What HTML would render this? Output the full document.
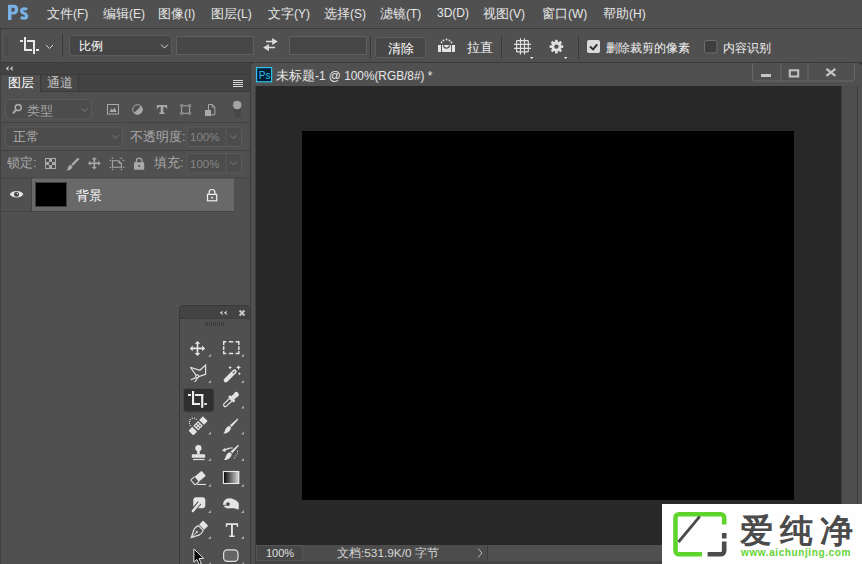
<!DOCTYPE html>
<html><head><meta charset="utf-8">
<style>
*{box-sizing:border-box;margin:0;padding:0}
html,body{width:862px;height:564px;overflow:hidden;background:#282828}
body{position:relative;font-family:"Liberation Sans",sans-serif;font-size:12px;color:#e6e6e6}
.a{position:absolute}
.t{position:absolute;white-space:nowrap;line-height:14px}
svg{position:absolute;overflow:visible}
</style></head><body>

<!-- MENU BAR -->
<div class="a" style="left:0;top:0;width:862px;height:28px;background:#505050"></div>
<svg style="left:0;top:0" width="40" height="28">
<path fill="#78b2e6" fill-rule="evenodd" d="M8 4.8 H13.6 C16.6 4.8 18.2 6.6 18.2 9.6 C18.2 12.6 16.4 14.6 13.4 14.6 H11.5 V19.9 H8 Z M11.5 7.7 V11.7 H13.2 C14.3 11.7 14.8 11 14.8 9.7 C14.8 8.4 14.3 7.7 13.2 7.7 Z"/>
<path d="M27 9.6 C26 8.9 25 8.8 24.1 8.8 C22.4 8.8 21.6 9.7 21.6 10.9 C21.6 13.6 26.7 13.1 26.7 16 C26.7 17.5 25.5 18.3 23.9 18.3 C22.9 18.3 21.8 18 20.8 17.3" fill="none" stroke="#78b2e6" stroke-width="3.1"/>
</svg>
<div class="t" style="left:47px;top:6px;line-height:15px"><span style="font-size:13px">文件</span><span style="font-size:12px">(F)</span></div>
<div class="t" style="left:103px;top:6px;line-height:15px"><span style="font-size:13px">编辑</span><span style="font-size:12px">(E)</span></div>
<div class="t" style="left:158px;top:6px;line-height:15px"><span style="font-size:13px">图像</span><span style="font-size:12px">(I)</span></div>
<div class="t" style="left:211px;top:6px;line-height:15px"><span style="font-size:13px">图层</span><span style="font-size:12px">(L)</span></div>
<div class="t" style="left:268px;top:6px;line-height:15px"><span style="font-size:13px">文字</span><span style="font-size:12px">(Y)</span></div>
<div class="t" style="left:324px;top:6px;line-height:15px"><span style="font-size:13px">选择</span><span style="font-size:12px">(S)</span></div>
<div class="t" style="left:380px;top:6px;line-height:15px"><span style="font-size:13px">滤镜</span><span style="font-size:12px">(T)</span></div>
<div class="t" style="left:437px;top:6px;line-height:15px;font-size:12px">3D(D)</div>
<div class="t" style="left:483px;top:6px;line-height:15px"><span style="font-size:13px">视图</span><span style="font-size:12px">(V)</span></div>
<div class="t" style="left:542px;top:6px;line-height:15px"><span style="font-size:13px">窗口</span><span style="font-size:12px">(W)</span></div>
<div class="t" style="left:603px;top:6px;line-height:15px"><span style="font-size:13px">帮助</span><span style="font-size:12px">(H)</span></div>
<div class="a" style="left:0;top:28px;width:862px;height:1px;background:#3a3a3a"></div>

<!-- OPTIONS BAR -->
<div class="a" style="left:0;top:29px;width:862px;height:33px;background:#505050"></div>
<div class="a" style="left:0;top:62px;width:862px;height:1px;background:#3a3a3a"></div>
<!-- grip -->
<div class="a" style="left:0;top:29px;width:1px;height:33px;background:#404040"></div>
<svg style="left:0;top:0" width="862" height="64">
<g fill="#454545">
<rect x="5" y="36" width="3" height="1"/><rect x="5" y="38" width="3" height="1"/><rect x="5" y="40" width="3" height="1"/><rect x="5" y="42" width="3" height="1"/><rect x="5" y="44" width="3" height="1"/><rect x="5" y="46" width="3" height="1"/><rect x="5" y="48" width="3" height="1"/><rect x="5" y="50" width="3" height="1"/><rect x="5" y="52" width="3" height="1"/><rect x="5" y="54" width="3" height="1"/>
</g>
<g fill="#e8e8e8">
<rect x="20" y="40" width="3" height="2"/><rect x="24" y="37" width="2" height="14"/><rect x="24" y="49" width="8" height="2"/>
<rect x="27" y="40" width="8" height="2"/><rect x="33" y="40" width="2" height="14"/><rect x="36" y="49" width="3" height="2"/>
</g>
<path d="M46 45 L49.5 48.5 L53 45" fill="none" stroke="#cfcfcf" stroke-width="1"/>
<rect x="62" y="34" width="1" height="23" fill="#3a3a3a"/>
</svg>
<div class="a" style="left:69px;top:35px;width:103px;height:21px;background:#454545;border:1px solid #5c5c5c;border-radius:3px"></div>
<div class="t" style="left:79px;top:39px;font-size:12.2px;color:#fff">比例</div>
<svg style="left:0;top:0" width="862" height="64"><path d="M161 44.5 L164.5 48 L168 44.5" fill="none" stroke="#d8d8d8" stroke-width="1"/></svg>
<div class="a" style="left:176px;top:36px;width:78px;height:19px;background:#474747;border:1px solid #5f5f5f"></div>
<div class="a" style="left:289px;top:36px;width:78px;height:19px;background:#474747;border:1px solid #5f5f5f"></div>
<svg style="left:0;top:0" width="862" height="64">
<g fill="#dcdcdc">
<path d="M266 40.7 H272.2 V38 L277.7 41.4 L272.2 44.9 V42.2 H266 Z"/>
<path d="M275.1 46.8 H268.9 V44 L263.2 47.6 L268.9 51.2 V48.3 H275.1 Z"/>
</g>
<rect x="370" y="35" width="1" height="23" fill="#3a3a3a"/>
</svg>
<div class="a" style="left:375px;top:37px;width:51px;height:21px;background:#474747;border:1px solid #5c5c5c;border-radius:3px"></div>
<div class="t" style="left:388px;top:41.5px;font-size:12.6px;color:#fff">清除</div>
<svg style="left:0;top:0" width="862" height="64">
<g fill="#e4e4e4">
<rect x="438" y="45" width="3" height="7"/>
<rect x="442" y="45" width="9.1" height="7"/>
<rect x="452" y="45" width="3" height="7"/>
<circle cx="441.5" cy="42.4" r="0.9"/><circle cx="443.4" cy="40.5" r="0.9"/><circle cx="446.5" cy="39.5" r="0.9"/><circle cx="449.5" cy="40.5" r="0.9"/><circle cx="451.5" cy="42.4" r="0.9"/>
</g>
<path d="M443.6 45.2 A2.9 2.9 0 0 0 449.4 45.2" fill="none" stroke="#4a4a4a" stroke-width="1.1"/>
<rect x="501" y="36" width="1" height="22" fill="#3a3a3a"/>
<g stroke="#e0e0e0" stroke-width="1.15" fill="none">
<path d="M516.6 40.6 V51.9 M528.3 40.6 V51.9 M516.6 40.6 H528.3 M516.6 51.9 H528.3 M520.5 38.2 V54.6 M524.5 38.2 V54.6 M514 44.4 H531 M514 48.3 H531"/>
</g>
<path d="M530 57 H533.4 L531.7 59 Z" fill="#f0f0f0"/>
<g fill="#e0e0e0">
<circle cx="556.4" cy="46.6" r="5"/>
<g transform="translate(556.4 46.6)">
<rect x="-1.3" y="-6.8" width="2.6" height="13.6"/>
<rect x="-6.8" y="-1.3" width="13.6" height="2.6"/>
<rect x="-1.3" y="-6.8" width="2.6" height="13.6" transform="rotate(45)"/>
<rect x="-1.3" y="-6.8" width="2.6" height="13.6" transform="rotate(-45)"/>
</g>
</g>
<circle cx="556.4" cy="46.6" r="2.2" fill="#505050"/>
<path d="M564 57 H567.4 L565.7 59 Z" fill="#f0f0f0"/>
<rect x="578" y="36" width="1" height="23" fill="#3a3a3a"/>
<rect x="587" y="40" width="13" height="13" rx="2" fill="#dadada"/>
<path d="M590 46.6 L593.1 49.4 L597.2 44.3" fill="none" stroke="#2e2e2e" stroke-width="2"/>
<rect x="704.5" y="40.5" width="12.5" height="12.5" rx="2" fill="#3e3e3e" stroke="#6e6e6e" stroke-width="1"/>
</svg>
<div class="t" style="left:467px;top:41px;font-size:12.6px;color:#f0f0f0">拉直</div>
<div class="t" style="left:606px;top:41px;font-size:12.3px;color:#f0f0f0">删除裁剪的像素</div>
<div class="t" style="left:723px;top:41px;font-size:12.1px;color:#f0f0f0">内容识别</div>



<!-- LEFT DOCK -->
<div class="a" style="left:0;top:63px;width:250px;height:501px;background:#505050"></div>
<div class="a" style="left:0;top:63px;width:250px;height:11px;background:#434343"></div>
<div class="a" style="left:0;top:74px;width:250px;height:1px;background:#393939"></div>
<div class="a" style="left:0;top:75px;width:250px;height:16px;background:#434343"></div>
<div class="a" style="left:0;top:75px;width:40px;height:16px;background:#505050"></div>
<div class="a" style="left:40px;top:75px;width:39px;height:16px;background:#474747;border-left:1px solid #3a3a3a;border-right:1px solid #3a3a3a"></div>
<div class="a" style="left:40px;top:91px;width:210px;height:1px;background:#3a3a3a"></div>
<div class="a" style="left:0;top:63px;width:1px;height:501px;background:#404040"></div>
<div class="t" style="left:8px;top:76px;font-size:12.8px;color:#fff">图层</div>
<div class="t" style="left:47px;top:76px;font-size:12.8px;color:#c4c4c4">通道</div>
<svg style="left:0;top:0" width="260" height="564">
<path d="M5.8 68.45 L9 65.9 L8.1 68.45 L9 71 Z M9.9 68.45 L13.1 65.9 L12.2 68.45 L13.1 71 Z" fill="#d4d4d4"/>
<g fill="#d6d6d6"><rect x="233" y="80" width="10" height="1"/><rect x="233" y="82" width="10" height="1"/><rect x="233" y="84" width="10" height="1"/><rect x="233" y="86" width="10" height="1"/></g>
<rect x="0" y="122" width="250" height="1" fill="#424242"/>
<rect x="0" y="150" width="250" height="1" fill="#424242"/>
<!-- filter row -->
<rect x="5.5" y="99.5" width="86" height="19.5" rx="3" fill="#4c4c4c" stroke="#5b5b5b"/>
<circle cx="18.2" cy="107.6" r="3" fill="none" stroke="#a8a8a8" stroke-width="1.6"/>
<path d="M16 110 L13.5 112.7" stroke="#a8a8a8" stroke-width="2" stroke-linecap="round"/>
<path d="M81.5 108.3 L84.6 111.4 L87.7 108.3" fill="none" stroke="#7c7c7c" stroke-width="1"/>
<g fill="none" stroke="#a9a9a9" stroke-width="1">
<rect x="107.5" y="104.5" width="11" height="9.5"/>
<circle cx="137.5" cy="109.5" r="4.8"/>
<path d="M182 105.8 H189.3 M182 113.3 H189.3 M181.6 106 V113 M189.6 106 V113"/>
<circle cx="181.6" cy="105.6" r="1.15" fill="#505050"/><circle cx="189.6" cy="105.6" r="1.15" fill="#505050"/><circle cx="181.6" cy="113.4" r="1.15" fill="#505050"/><circle cx="189.6" cy="113.4" r="1.15" fill="#505050"/>
<path d="M208.5 110 V104.5 H212.3 L214.8 107 V114.8 H211"/>
<path d="M212.3 104.5 V107 H214.8"/>
</g>
<g fill="#a9a9a9">
<path d="M109.5 112 L111.5 108.2 L113 110.3 L114.6 107.6 L116.8 112 Z"/>
<path d="M141 106 A4.8 4.8 0 0 1 134 113 Z"/>
<path d="M156.8 105 H167.2 V108.5 H166 L165.3 106.8 H163.3 V112.6 H164.6 V114.1 H159.4 V112.6 H160.7 V106.8 H158.7 L158 108.5 H156.8 Z"/>
<rect x="205" y="110" width="6" height="6"/>
<circle cx="237.1" cy="104.9" r="4.1"/>
</g>
<rect x="232.9" y="101.4" width="8.6" height="17" rx="4.3" fill="#474747" stroke="#555" stroke-width="0.8"/>
<circle cx="237.2" cy="105.2" r="4.1" fill="#a4a4a4"/>
<!-- blend row -->
<rect x="5.5" y="127" width="117" height="19.5" rx="3" fill="#4c4c4c" stroke="#5b5b5b"/>
<path d="M112.5 109.3 M112.5 135.3 L115.6 138.4 L118.7 135.3" fill="none" stroke="#7c7c7c" stroke-width="1"/>
<rect x="187" y="127" width="54.5" height="19.5" rx="3" fill="#4c4c4c" stroke="#5b5b5b"/>
<rect x="225.5" y="127" width="1" height="19.5" fill="#5b5b5b"/>
<path d="M230.5 135.3 L233.6 138.4 L236.7 135.3" fill="none" stroke="#7c7c7c" stroke-width="1"/>
<!-- lock row -->
<rect x="187" y="153.5" width="54.5" height="19.5" rx="3" fill="#4c4c4c" stroke="#5b5b5b"/>
<rect x="225.5" y="153.5" width="1" height="19.5" fill="#5b5b5b"/>
<path d="M230.5 161.8 L233.6 164.9 L236.7 161.8" fill="none" stroke="#7c7c7c" stroke-width="1"/>
<g fill="#a9a9a9">
<path fill-rule="evenodd" d="M45 158 H56 V169 H45 Z M46 159 V162 H49 V159 Z M52 159 V162 H55 V159 Z M49 162 V165 H52 V162 Z M46 165 V168 H49 V165 Z M52 165 V168 H55 V165 Z"/>
<path d="M78.6 158 C79.6 158.5 79.4 159.3 78.7 160 L73 165.8 L71.2 164.2 L77 158.6 C77.6 158 78 157.8 78.6 158 Z"/>
<path d="M70.6 164.8 L72.5 166.5 C72.3 168.8 70.2 170.6 66.5 170.6 C67.6 169.8 67.5 167.8 68.6 166.3 C69.2 165.5 69.9 165.1 70.6 164.8 Z"/>
<path d="M94.3 157 L96.8 159.5 H95.1 V162.5 H98.1 V160.8 L100.7 163.3 L98.1 165.8 V164.1 H95.1 V167.1 H96.8 L94.3 169.6 L91.8 167.1 H93.5 V164.1 H90.5 V165.8 L87.9 163.3 L90.5 160.8 V162.5 H93.5 V159.5 H91.8 Z"/>
<rect x="134" y="162.2" width="10.2" height="7.6" rx="0.5"/>
</g>
<circle cx="139.2" cy="166" r="1" fill="#505050"/>
<path d="M136.4 162.6 V161 A2.8 2.8 0 0 1 142 161 V162.6" fill="none" stroke="#a9a9a9" stroke-width="1.3"/>
<path d="M112.4 160.8 H118.6 L121.4 163.6 V167.3 H112.4 Z" fill="none" stroke="#a9a9a9" stroke-width="1.1"/>
<g fill="#a9a9a9"><path d="M118.6 160.8 V163.6 H121.4 Z"/>
<rect x="111.8" y="157.6" width="1.2" height="1.4"/><rect x="109.6" y="159.8" width="1.4" height="1.2"/><rect x="109.6" y="166.8" width="1.4" height="1.2"/><rect x="111.8" y="168.8" width="1.2" height="1.4"/><rect x="120.8" y="168.8" width="1.2" height="1.4"/><rect x="122.8" y="166.8" width="1.4" height="1.2"/><rect x="120.8" y="157.6" width="1.2" height="1.4"/><rect x="122.8" y="159.8" width="1.4" height="1.2"/></g>
<!-- layer row -->
<rect x="0" y="177.5" width="250" height="1" fill="#424242"/>
<rect x="32" y="178.5" width="202" height="32.5" fill="#696969"/>
<rect x="0" y="211" width="234" height="1" fill="#454545"/>
<rect x="31" y="178.5" width="1" height="32.5" fill="#454545"/>
<rect x="35" y="182" width="32" height="25" fill="#3e3e3e"/>
<rect x="36" y="183" width="30" height="23" fill="#000"/>
<path d="M9.8 194.2 C12.5 189.8 20.7 189.8 23.4 194.2 C20.7 198.6 12.5 198.6 9.8 194.2 Z" fill="#e6e6e6"/>
<circle cx="16.5" cy="194.3" r="2.5" fill="#4a4a4a"/>
<circle cx="17.4" cy="193.5" r="0.7" fill="#e6e6e6"/>
<path d="M209.1 194.2 V192.4 A2.9 2.9 0 0 1 214.9 192.4 V194.2" fill="none" stroke="#f0f0f0" stroke-width="1.2"/>
<rect x="207.5" y="194.4" width="9.2" height="6.4" fill="none" stroke="#f0f0f0" stroke-width="1.2"/>
<rect x="211.3" y="196.9" width="1.6" height="1.6" fill="#f0f0f0"/>
</svg>
<div class="t" style="left:27px;top:104px;font-size:12.5px;color:#a4a4a4">类型</div>
<div class="t" style="left:13px;top:130px;font-size:12.6px;color:#b0b0b0">正常</div>
<div class="t" style="left:130px;top:130px;font-size:12.6px;color:#a8a8a8">不透明度:</div>
<div class="t" style="left:190px;top:130px;font-size:11.5px;color:#858585">100%</div>
<div class="t" style="left:7px;top:156px;font-size:12.6px;color:#a8a8a8">锁定:</div>
<div class="t" style="left:154px;top:156px;font-size:12.6px;color:#a8a8a8">填充:</div>
<div class="t" style="left:190px;top:157px;font-size:11.5px;color:#858585">100%</div>
<div class="t" style="left:76px;top:189px;font-size:13px;color:#fff">背景</div>
<div class="a" style="left:250px;top:63px;width:2px;height:501px;background:#3b3b3b"></div>

<!-- TOOLS PANEL -->
<svg style="left:0;top:0" width="862" height="564">
<path d="M179.5 564 V307.5 L181.5 305.5 H248.5 L250.5 307.5 V564" fill="#505050" stroke="#383838" stroke-width="1"/>
<path d="M180 318 V307.7 L182 306 H248 L250 307.7 V318 Z" fill="#434343"/>
<rect x="180" y="318" width="70" height="1" fill="#3c3c3c"/>
<g fill="#cfcfcf">
<path d="M219.8 312.8 L223 310.4 L222.2 312.8 L223 315.2 Z M223.9 312.8 L227.1 310.4 L226.3 312.8 L227.1 315.2 Z"/>
</g>
<path d="M239.6 310.5 L244.5 315.5 M244.5 310.5 L239.6 315.5" stroke="#c8c8c8" stroke-width="1.9"/>
<g fill="#3a3a3a">
<rect x="205" y="322" width="1" height="4"/><rect x="207" y="322" width="1" height="4"/><rect x="209" y="322" width="1" height="4"/><rect x="211" y="322" width="1" height="4"/><rect x="213" y="322" width="1" height="4"/><rect x="215" y="322" width="1" height="4"/><rect x="217" y="322" width="1" height="4"/><rect x="219" y="322" width="1" height="4"/><rect x="221" y="322" width="1" height="4"/><rect x="223" y="322" width="1" height="4"/>
</g>
<!-- corner triangles -->
<g fill="#a8a8a8">
<path d="M211 356.8 V353.8 L208 356.8 Z"/><path d="M244 356.8 V353.8 L241 356.8 Z"/>
<path d="M211 383 V380 L208 383 Z"/><path d="M244 383 V380 L241 383 Z"/>
<path d="M211 408.6 V405.6 L208 408.6 Z"/><path d="M244 408.6 V405.6 L241 408.6 Z"/>
<path d="M211 434.6 V431.6 L208 434.6 Z"/><path d="M244 434.6 V431.6 L241 434.6 Z"/>
<path d="M211 460.9 V457.9 L208 460.9 Z"/><path d="M244 460.9 V457.9 L241 460.9 Z"/>
<path d="M211 486.8 V483.8 L208 486.8 Z"/><path d="M244 486.8 V483.8 L241 486.8 Z"/>
<path d="M211 512.9 V509.9 L208 512.9 Z"/><path d="M244 512.9 V509.9 L241 512.9 Z"/>
<path d="M211 538.9 V535.9 L208 538.9 Z"/><path d="M244 538.9 V535.9 L241 538.9 Z"/>
<path d="M211 565 V562 L208 565 Z"/><path d="M244 565 V562 L241 565 Z"/>
</g>
<!-- move -->
<g fill="#e4e4e4">
<path d="M196.7 342.5 H198.3 V347.6 H203.4 V349.2 H198.3 V354.3 H196.7 V349.2 H191.6 V347.6 H196.7 Z"/>
<path d="M197.5 340.9 L200.3 343.8 H194.7 Z M197.5 356 L200.3 353.1 H194.7 Z M189.8 348.4 L192.7 345.6 V351.2 Z M205.1 348.4 L202.2 345.6 V351.2 Z"/>
</g>
<!-- marquee -->
<g fill="none" stroke="#e4e4e4" stroke-width="1.5">
<path d="M223.7 345 V341.7 H226.2 M228.8 341.7 H233.2 M235.6 341.7 H238.8 V345 M238.8 346.3 V349.9 M238.8 351 V353.4 H235.6 M233.2 353.4 H228.8 M226.2 353.4 H223.7 V351 M223.7 349.9 V346.3"/>
</g>
<!-- lasso -->
<g fill="none" stroke="#e4e4e4" stroke-width="1.2">
<path d="M190.3 367.2 L199.8 370.3 L205.6 365 V374.4 L198.6 376.6 M190.3 367.2 L195.9 375"/>
<circle cx="197.1" cy="376.4" r="1.5"/>
<path d="M195.9 377.6 L190.8 379.8 M197.7 378 L194.7 381.8"/>
</g>
<!-- magic wand -->
<path d="M225.8 380.2 L234.6 371.4" stroke="#e4e4e4" stroke-width="4.2" stroke-linecap="round"/>
<path d="M233.1 372.9 L234.4 371.6" stroke="#505050" stroke-width="1.2" stroke-linecap="round"/>
<g fill="#e4e4e4">
<path d="M230.1 365.7 L230.7 367 L232 367.6 L230.7 368.2 L230.1 369.5 L229.5 368.2 L228.2 367.6 L229.5 367 Z"/>
<path d="M238.5 365 L239.3 366.7 L241 367.5 L239.3 368.3 L238.5 370 L237.7 368.3 L236 367.5 L237.7 366.7 Z"/>
<path d="M239.4 372.1 L239.9 373.3 L241.1 373.8 L239.9 374.3 L239.4 375.5 L238.9 374.3 L237.7 373.8 L238.9 373.3 Z"/>
</g>
<!-- crop selected -->
<rect x="183.5" y="388.5" width="30.5" height="23.5" rx="3" fill="#2f2f2f" stroke="#474747" stroke-width="1"/>
<g fill="#ececec">
<rect x="188" y="394" width="3" height="2"/><rect x="192" y="391" width="2.1" height="14"/><rect x="192" y="403" width="8" height="2"/>
<rect x="195" y="394" width="8.3" height="2"/><rect x="201.1" y="394" width="2.2" height="13.8"/><rect x="204.3" y="403" width="2.5" height="2"/>
</g>
<!-- eyedropper -->
<g transform="translate(230.9 399.6) rotate(-43)">
<rect x="-9.4" y="-1.7" width="9.8" height="3.4" rx="1.7" fill="none" stroke="#e4e4e4" stroke-width="1.15"/>
<g fill="#e4e4e4"><rect x="-0.2" y="-3.9" width="2.6" height="7.8" rx="0.5"/><rect x="2.2" y="-2.3" width="2.8" height="4.6"/><rect x="4.6" y="-2.5" width="5.2" height="5" rx="2.2"/></g>
</g>
<!-- healing -->
<g transform="translate(198.1 425.8) rotate(-45)">
<path d="M-9.2 -3.4 H-4.9 V3.4 H-9.2 C-10 3.4 -10.2 3 -10.2 2.4 V-2.4 C-10.2 -3 -10 -3.4 -9.2 -3.4 Z" fill="#e4e4e4"/>
<path d="M9.2 -3.4 H4.9 V3.4 H9.2 C10 3.4 10.2 3 10.2 2.4 V-2.4 C10.2 -3 10 -3.4 9.2 -3.4 Z" fill="#e4e4e4"/>
<rect x="-3.4" y="-3.4" width="6.8" height="6.8" fill="#e4e4e4"/>
<g fill="#4a4a4a"><rect x="-2.1" y="-2.1" width="1.5" height="1.5"/><rect x="0.6" y="-2.1" width="1.5" height="1.5"/><rect x="-2.1" y="0.6" width="1.5" height="1.5"/><rect x="0.6" y="0.6" width="1.5" height="1.5"/></g>
</g>
<g fill="#e4e4e4"><circle cx="189.5" cy="421.5" r="0.65"/><circle cx="189.5" cy="423.6" r="0.65"/><circle cx="190.4" cy="425.6" r="0.65"/><circle cx="190.4" cy="419.4" r="0.65"/><circle cx="192.4" cy="418.2" r="0.65"/><circle cx="194.5" cy="418.2" r="0.65"/><circle cx="196.4" cy="419.3" r="0.65"/></g>
<!-- brush -->
<g fill="#e4e4e4">
<path d="M237.9 418.6 C238.3 418.9 238.1 419.6 237.6 420.3 L231.6 426.9 L229.9 425.3 L236.7 419.2 C237.2 418.7 237.6 418.4 237.9 418.6 Z"/>
<path d="M229.3 425.9 L231.1 427.6 C230.6 430.8 228 433.8 223.2 433.8 C224.8 432.6 224.7 430.3 226 428.3 C226.8 427 228 426.2 229.3 425.9 Z"/>
</g>
<!-- stamp -->
<g fill="#e4e4e4">
<circle cx="198.4" cy="448.2" r="3.1"/>
<rect x="197.1" y="450" width="2.6" height="4.5"/>
<path d="M193 454.3 H203.8 C204.6 454.3 205.1 454.8 205.1 455.6 V457.8 H191.8 V455.6 C191.8 454.8 192.3 454.3 193 454.3 Z"/>
<rect x="193" y="458.9" width="11.5" height="1.2"/>
</g>
<!-- history brush -->
<g fill="#e4e4e4">
<path d="M238.5 444.8 C238.9 445.1 238.7 445.8 238.2 446.5 L232.3 453.2 L230.6 451.6 L237.3 445.4 C237.8 444.9 238.2 444.6 238.5 444.8 Z"/>
<path d="M230 452.2 L231.8 453.9 C231.3 457.1 228.7 460 224 460 C225.5 458.8 225.4 456.6 226.7 454.6 C227.5 453.3 228.7 452.5 230 452.2 Z"/>
<path d="M222 450.6 L225.3 447.8 V449.3 C227.5 447.6 230.3 447.2 232.8 447.5 V448.5 C230.5 448.4 228 449 225.3 450.7 V452 Z"/>
<circle cx="237.6" cy="451.2" r="0.6"/><circle cx="237.2" cy="453.6" r="0.6"/><circle cx="236" cy="455.8" r="0.6"/><circle cx="234.5" cy="457.8" r="0.6"/>
</g>
<!-- eraser -->
<g transform="translate(198.4 477.8) rotate(-40)">
<rect x="-2.2" y="-3.3" width="9.2" height="6.6" rx="0.8" fill="#e4e4e4"/>
<path d="M-2.2 -3.3 H-6.4 C-6.9 -3.3 -7.2 -3 -7.2 -2.5 V2.5 C-7.2 3 -6.9 3.3 -6.4 3.3 H-2.2" fill="none" stroke="#e4e4e4" stroke-width="1.1"/>
</g>
<rect x="197.2" y="483.9" width="8.7" height="1.1" fill="#e4e4e4"/>
<!-- gradient -->
<defs><linearGradient id="gr" x1="0" x2="1" y1="0" y2="0"><stop offset="0" stop-color="#050505"/><stop offset="1" stop-color="#d8d8d8"/></linearGradient></defs>
<rect x="223.4" y="471.5" width="15.4" height="12" fill="url(#gr)" stroke="#ececec" stroke-width="1.1"/>
<!-- smudge -->
<rect x="193.3" y="497.2" width="12" height="11" rx="3" fill="#e4e4e4"/>
<path d="M199.6 502.6 L192.4 511.6" stroke="#505050" stroke-width="4.6"/>
<path d="M200.6 501.6 L192.9 511" stroke="#e4e4e4" stroke-width="2.5" stroke-linecap="round"/>
<!-- sponge -->
<path fill="#e4e4e4" d="M224.5 500.5 C226 498.2 230.5 497.6 233.5 499.2 C236 500.3 238.2 501.5 238.8 503.5 L238.7 509.6 C236.5 508.6 233.5 507.8 230 508.3 C227 508.8 224.5 507.8 223.4 505.6 C222.7 504 223.3 502 224.5 500.5 Z"/>
<circle cx="228" cy="504.1" r="1.9" fill="#4a4a4a"/>
<path d="M226.4 505.2 L223 505.5" stroke="#4a4a4a" stroke-width="0.9"/>
<!-- pen -->
<g transform="translate(198.4 530.4) rotate(-45)">
<path d="M-10 0 L-2.5 -3.8 C-0.5 -4.4 1.8 -4.1 3.4 -3.4 V3.4 C1.8 4.1 -0.5 4.4 -2.5 3.8 Z" fill="none" stroke="#e4e4e4" stroke-width="1.2"/>
<rect x="4.6" y="-3.6" width="5.6" height="7.2" rx="0.6" fill="#e4e4e4"/>
<circle cx="-2.3" cy="0" r="1.1" fill="#e4e4e4"/>
<path d="M-10 0 H-3" stroke="#e4e4e4" stroke-width="0.9"/>
</g>
<!-- type -->
<path fill="#e4e4e4" d="M225.8 523.3 H238.1 V527 H237 L236.5 525 H232.9 V535.6 H234.6 V537.1 H229.3 V535.6 H231 V525 H227.4 L226.9 527 H225.8 Z"/>
<!-- path select -->
<path d="M193.9 549 V562.2 L196.8 559.4 L199.2 564.5 L201.3 563.6 L199 558.6 L203.6 558.3 Z" fill="#050505" stroke="#e8e8e8" stroke-width="1"/>
<!-- rounded rect -->
<rect x="223.6" y="549.8" width="14.4" height="11.6" rx="3.6" fill="#646464" stroke="#e0e0e0" stroke-width="1.2"/>
</svg>

<!-- DOC WINDOW -->
<div class="a" style="left:251px;top:63px;width:611px;height:501px;background:#505050;border-radius:3px 3px 0 0"></div>
<div class="a" style="left:256px;top:86px;width:585px;height:459px;background:#282828"></div>
<div class="a" style="left:302px;top:131px;width:492px;height:369px;background:#000"></div>
<div class="a" style="left:841px;top:86px;width:17px;height:478px;background:#4d4d4d;border-left:1px solid #3e3e3e;border-right:1px solid #3e3e3e"></div>
<svg style="left:0;top:0" width="862" height="564">
<rect x="256.6" y="67.6" width="15" height="14.2" fill="#001d34" stroke="#2fc3f2" stroke-width="1.2"/>
<text x="258.8" y="78.6" font-family="Liberation Sans" font-size="10" fill="#31c5f0">Ps</text>
<path d="M752.5 63 V78.5 A2.5 2.5 0 0 0 755 81 H852 A2.5 2.5 0 0 0 854.5 78.5 V63" fill="none" stroke="#686868" stroke-width="1"/>
<rect x="780.5" y="63" width="1" height="18" fill="#686868"/>
<rect x="807.5" y="63" width="1" height="18" fill="#686868"/>
<rect x="761" y="74" width="10" height="3" fill="#c4c4c4"/>
<rect x="789.8" y="70.3" width="8.4" height="6.2" fill="none" stroke="#c4c4c4" stroke-width="2"/>
<path d="M826.4 68.8 L835.4 75.8 M835.4 68.8 L826.4 75.8" stroke="#c4c4c4" stroke-width="2.2"/>
</svg>
<div class="t" style="left:276px;top:68px;line-height:16px;color:#e8e8e8"><span style="font-size:13px">未标题</span><span style="font-size:11.85px">-1 @ 100%(RGB/8#) *</span></div>
<!-- status bar -->
<div class="a" style="left:256px;top:545px;width:585px;height:16px;background:#505050"></div>
<div class="a" style="left:256px;top:545px;width:47px;height:16px;background:#474747;border:1px solid #555"></div>
<div class="a" style="left:303px;top:545px;width:184px;height:16px;background:#4c4c4c"></div>
<div class="a" style="left:487px;top:545px;width:1px;height:16px;background:#3e3e3e"></div>
<div class="a" style="left:256px;top:561px;width:585px;height:3px;background:#444"></div>
<div class="a" style="left:255px;top:86px;width:1px;height:478px;background:#3e3e3e"></div>
<div class="t" style="left:266px;top:546px;font-size:11px;color:#e0e0e0">100%</div>
<div class="t" style="left:337px;top:546px;font-size:11.8px;color:#d8d8d8">文档:531.9K/0 字节</div>
<svg style="left:0;top:0" width="862" height="564"><path d="M478.2 548.5 L481.8 553 L478.2 557.5" fill="none" stroke="#b8b8b8" stroke-width="1"/></svg>
<!-- WATERMARK -->
<div class="a" style="left:662px;top:504px;width:200px;height:60px;background:#fefefe"></div>
<svg style="left:0;top:0" width="862" height="564">
<path d="M702 554.3 H679 A3.5 3.5 0 0 1 675.5 550.8 V517.7 A3.5 3.5 0 0 1 679 514.2 H720.7 A3.5 3.5 0 0 1 724.2 517.7 V524.4" fill="none" stroke="#5fd52c" stroke-width="4.6"/>
<path d="M724.2 533 V538.5" stroke="#4b4b4b" stroke-width="4.6"/>
<path d="M724.2 541.5 V550.8 A3.5 3.5 0 0 1 720.7 554.3 H707.6" fill="none" stroke="#4b4b4b" stroke-width="4.6"/>
<path d="M678.5 542 L699.8 516.4" stroke="#4b4b4b" stroke-width="2.8"/>
</svg>
<div class="t" style="left:740px;top:512px;font-size:33px;line-height:38px;font-weight:bold;color:#4b4b4b;letter-spacing:7px">爱纯净</div>
<div class="t" style="left:741px;top:548px;font-size:10px;line-height:10px;font-weight:bold;color:#66d433;letter-spacing:0.6px">www.aichunjing.com</div>
</body></html>
